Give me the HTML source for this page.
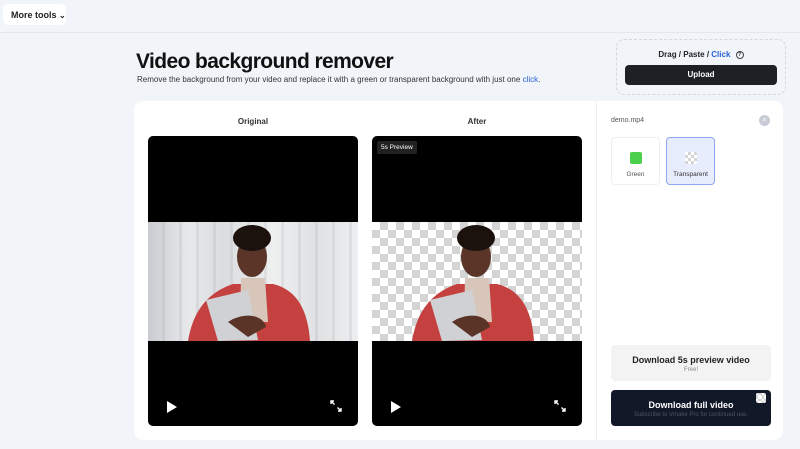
<!DOCTYPE html>
<html><head><meta charset="utf-8"><style>
*{box-sizing:border-box;margin:0;padding:0}
body{width:800px;height:449px;overflow:hidden;background:#f1f4f9;font-family:"Liberation Sans",sans-serif;color:#1a1d24;position:relative}
.abs{position:absolute}
.more{left:3px;top:4px;width:63px;height:21px;background:#fff;border-radius:5px;font-size:9px;font-weight:bold;padding:6px 0 0 8px;color:#222}
.hline{left:0;top:32px;width:800px;height:1px;background:#e4e7ee}
h1{position:absolute;left:136px;top:50px;font-size:21px;font-weight:bold;color:#111;letter-spacing:-0.6px}
.sub{left:137px;top:75px;font-size:8px;color:#333}
.sub span{color:#2a63d4}
.drop{left:616px;top:39px;width:170px;height:56px;border:1px dashed #d3d7df;border-radius:8px}
.drag{left:616px;top:50px;width:170px;text-align:center;font-size:8px;font-weight:bold;color:#222}
.up{left:625px;top:65px;width:152px;height:20px;background:#1e2026;border-radius:4px;color:#fff;font-size:8px;font-weight:bold;text-align:center;line-height:20px}
.card{left:134px;top:101px;width:649px;height:339px;background:#fff;border-radius:9px}
.div{left:596px;top:101px;width:1px;height:339px;background:#eceef2}
.lab{font-size:8px;font-weight:bold;color:#333;text-align:center;width:210px;top:117px}
.vid{top:136px;width:210px;height:290px;background:#000;border-radius:5px;overflow:hidden}
.img{position:absolute;left:0;top:86px;width:210px;height:119px}
.bg1{background:repeating-linear-gradient(90deg,rgba(0,0,0,0) 0 14px,rgba(120,125,130,.12) 14px 17px),linear-gradient(90deg,#c9ccd0 0%,#e8e9eb 20%,#dadcdf 35%,#eeefef 60%,#dfe1e3 80%,#eceef0 100%)}
.chk{background-color:#fff;background-image:linear-gradient(45deg,#d4d4d4 25%,transparent 25%,transparent 75%,#d4d4d4 75%),linear-gradient(45deg,#d4d4d4 25%,transparent 25%,transparent 75%,#d4d4d4 75%);background-size:16px 16px;background-position:0 0,8px 8px}
.play{left:19px;top:265px;width:0;height:0;border-left:10px solid #fff;border-top:6px solid transparent;border-bottom:6px solid transparent}
.fs{left:182px;top:264px}
.badge{left:5px;top:5px;background:#222;color:#fff;font-size:6.5px;padding:3px 4px;border-radius:2px}
.fn{left:611px;top:117px;font-size:7px;color:#555}
.x{left:759px;top:115px;width:11px;height:11px;border-radius:50%;background:#c9ccd6;color:#fff;font-size:7px;text-align:center;line-height:11px}
.opt{top:137px;width:49px;height:48px;border:1px solid #eee;border-radius:4px;font-size:6.5px;color:#555;text-align:center}
.opt i{display:block;width:12px;height:12px;margin:14px auto 7px;border-radius:2px}
.dl1{left:611px;top:345px;width:160px;height:36px;background:#f3f3f4;border-radius:4px;text-align:center}
.dl2{left:611px;top:390px;width:160px;height:36px;background:#111827;border-radius:4px;text-align:center}
</style></head><body>
<div class="abs more">More tools <span style="font-size:8px">&#8964;</span></div>
<div class="abs hline"></div>
<h1>Video background remover</h1>
<div class="abs sub">Remove the background from your video and replace it with a green or transparent background with just one <span>click</span>.</div>
<div class="abs drop"></div>
<div class="abs drag">Drag / Paste / <span style="color:#2a63d4">Click</span> <span style="display:inline-block;width:8px;height:8px;border:1px solid #444;border-radius:50%;font-size:5px;line-height:6px;vertical-align:middle;margin-left:3px">?</span></div>
<div class="abs up">Upload</div>
<div class="abs card"></div>
<div class="abs div"></div>
<div class="abs lab" style="left:148px">Original</div>
<div class="abs lab" style="left:372px">After</div>

<svg width="0" height="0" style="position:absolute"><defs><g id="p">
<path d="M40 119 C44 95 55 72 85 62 L125 62 C150 68 160 90 162 119 Z" fill="#c5413f"/>
<path d="M93 56 L117 56 L120 100 L92 100 Z" fill="#d8c6bb"/>
<path d="M58 78 L100 68 L110 118 L70 119 Z" fill="#cfd1d4"/>
<path d="M80 100 C95 90 115 92 118 105 L100 115 Z" fill="#5a3426"/>
<ellipse cx="104" cy="35" rx="15" ry="20" fill="#5b3628"/>
<ellipse cx="104" cy="16" rx="19" ry="13" fill="#1b120e"/>
</g></defs></svg>

<div class="abs vid" style="left:148px">
<div class="img bg1"><svg width="210" height="119" viewBox="0 0 210 119"><use href="#p"/></svg></div>
<div class="abs play"></div>
<svg class="abs fs" width="12" height="12" viewBox="0 0 12 12" fill="none" stroke="#fff" stroke-width="1.4"><path d="M1 1l3.5 3.5M1 4V1h3M11 11L7.5 7.5M11 8v3H8"/></svg>
</div>
<div class="abs vid" style="left:372px">
<div class="img chk"><svg width="210" height="119" viewBox="0 0 210 119"><use href="#p"/></svg></div>
<div class="abs badge">5s Preview</div>
<div class="abs play"></div>
<svg class="abs fs" width="12" height="12" viewBox="0 0 12 12" fill="none" stroke="#fff" stroke-width="1.4"><path d="M1 1l3.5 3.5M1 4V1h3M11 11L7.5 7.5M11 8v3H8"/></svg>
</div>

<div class="abs fn">demo.mp4</div>
<div class="abs x">×</div>
<div class="abs opt" style="left:611px"><i style="background:#4cd04c"></i>Green</div>
<div class="abs opt" style="left:666px;background:#e8edfd;border-color:#8ea6f0;color:#333"><i class="chk" style="background-size:6px 6px;background-position:0 0,3px 3px"></i>Transparent</div>
<div class="abs dl1"><div style="font-size:9px;font-weight:bold;margin-top:10px;color:#222">Download 5s preview video</div><div style="font-size:6px;color:#888;margin-top:2px">Free!</div></div>
<div class="abs dl2"><div style="font-size:9px;font-weight:bold;margin-top:10px;color:#fff">Download full video</div><div style="font-size:6px;color:#4b5563;margin-top:2px">Subscribe to Vmake Pro for continued use.</div>
<div class="abs chk" style="right:5px;top:3px;width:10px;height:10px;border-radius:2px;background-size:6px 6px"></div></div>
</body></html>
